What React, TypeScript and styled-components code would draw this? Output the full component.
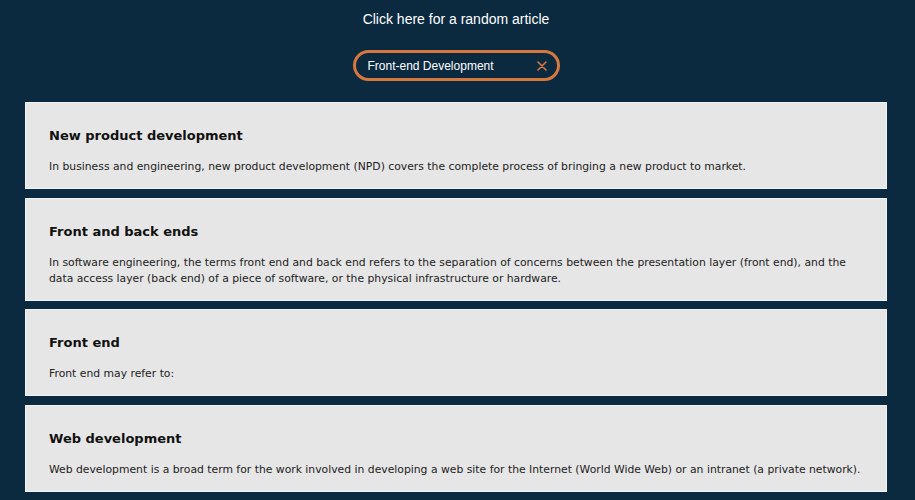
import React from "react";
import styled, { createGlobalStyle } from "styled-components";

const Global = createGlobalStyle`
  html, body { margin: 0; padding: 0; background: #0b2a3f; }
  body { font-family: "DejaVu Sans", sans-serif; }
`;

const Page = styled.div`
  display: flex;
  flex-direction: column;
  align-items: center;
  padding: 11px 28px 0 25px;
`;

const RandomLink = styled.a`
  font-family: "Liberation Sans", Arial, sans-serif;
  font-size: 14px;
  color: #ffffff;
  text-decoration: none;
  line-height: 16px;
  cursor: pointer;
`;

const SearchBox = styled.div`
  margin-top: 23px;
  width: 207px;
  height: 31px;
  box-sizing: border-box;
  border: 3px solid #d6783e;
  border-radius: 16px;
  display: flex;
  align-items: center;
  padding: 0 10px 0 12px;
`;

const SearchInput = styled.input`
  flex: 1;
  min-width: 0;
  background: transparent;
  border: none;
  outline: none;
  color: #ffffff;
  font-family: "Liberation Sans", Arial, sans-serif;
  font-size: 12px;
  padding: 0;
`;

const ClearButton = styled.button`
  background: none;
  border: none;
  padding: 0;
  display: flex;
  cursor: pointer;
`;

const List = styled.div`
  margin-top: 21px;
  align-self: stretch;
  display: flex;
  flex-direction: column;
  gap: 8.7px;
`;

const Card = styled.div`
  background: #e6e6e6;
  border: 1px solid #eef3f6;
  padding: 24px 18px 13px 23px;
`;

const Title = styled.h2`
  margin: 0 0 14px;
  font-family: "DejaVu Sans", sans-serif;
  font-weight: bold;
  font-size: 13px;
  line-height: 18px;
  color: #111;
`;

const Extract = styled.p`
  margin: 0;
  font-size: 10.8px;
  line-height: 16px;
  color: #222;
`;

const articles = [
  {
    title: "New product development",
    text: "In business and engineering, new product development (NPD) covers the complete process of bringing a new product to market.",
  },
  {
    title: "Front and back ends",
    text: "In software engineering, the terms front end and back end refers to the separation of concerns between the presentation layer (front end), and the data access layer (back end) of a piece of software, or the physical infrastructure or hardware.",
  },
  { title: "Front end", text: "Front end may refer to:" },
  {
    title: "Web development",
    text: "Web development is a broad term for the work involved in developing a web site for the Internet (World Wide Web) or an intranet (a private network).",
  },
];

export default function App() {
  return (
    <>
      <Global />
      <Page>
        <RandomLink>Click here for a random article</RandomLink>
        <SearchBox>
          <SearchInput defaultValue="Front-end Development" />
          <ClearButton aria-label="clear">
            <svg width="10" height="10" viewBox="0 0 10 10">
              <path d="M1 1 L9 9 M9 1 L1 9" stroke="#d6783e" strokeWidth="1.6" strokeLinecap="round" />
            </svg>
          </ClearButton>
        </SearchBox>
        <List>
          {articles.map((a) => (
            <Card key={a.title}>
              <Title>{a.title}</Title>
              <Extract>{a.text}</Extract>
            </Card>
          ))}
        </List>
      </Page>
    </>
  );
}
